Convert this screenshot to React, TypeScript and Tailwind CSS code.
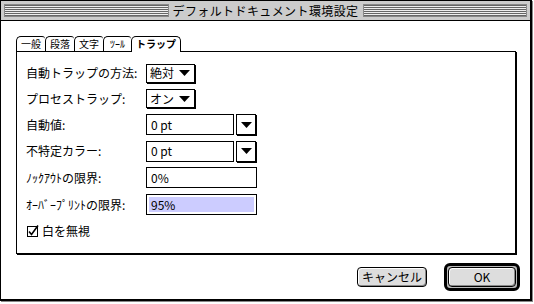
const jp = "font-['Noto_Sans_CJK_JP','Noto_Sans',sans-serif]";

function Tri() {
  return (
    <svg width="11" height="6" viewBox="0 0 11 6" className="shrink-0">
      <path d="M0 0h11L5.5 6z" fill="#000" />
    </svg>
  );
}

function Popup({ value, w }: { value: string; w: string }) {
  return (
    <div className={`flex h-[19px] ${w} items-center justify-between border border-black bg-white pl-[3px] pr-[4px] text-[12px] shadow-[1px_1px_0_#000]`}>
      <span className="leading-none">{value}</span>
      <Tri />
    </div>
  );
}

function Field({ value, w, hilite }: { value: string; w: string; hilite?: boolean }) {
  return (
    <div className={`flex h-[21px] ${w} items-stretch border border-black bg-white p-[2px] text-[12px]`}>
      <div className={`flex flex-1 items-center pl-[2px] leading-none ${hilite ? "bg-[#ccccff]" : ""}`}>{value}</div>
    </div>
  );
}

function Combo({ value }: { value: string }) {
  return (
    <div className="flex items-center gap-[2px]">
      <Field value={value} w="w-[88px]" />
      <div className="flex h-[21px] w-[20px] items-center justify-center border border-black bg-white shadow-[1px_1px_0_#000]">
        <Tri />
      </div>
    </div>
  );
}

const tabs = [
  { t: "一般", px: "px-[4px]" },
  { t: "段落", px: "px-[4px]" },
  { t: "文字", px: "px-[4px]" },
  { t: "ﾂｰﾙ", px: "px-[6px]" },
];

export default function App() {
  return (
    <div className={`h-[304px] w-[534px] bg-white ${jp} text-black`}>
      <div className="flex h-[301px] w-[532px] flex-col border-t border-l border-r-2 border-b-2 border-black bg-white shadow-[1px_1px_0_#888]">
        {/* title bar */}
        <div className="flex h-[20px] items-center gap-[4px] border-b border-black bg-[#cccccc] px-[3px]">
          <div className="h-[13px] flex-1 border border-[#888] bg-[repeating-linear-gradient(to_bottom,#666_0_1px,#eeeeee_1px_2px)]" />
          <span className="text-[12px] leading-none tracking-[0.4px]">デフォルトドキュメント環境設定</span>
          <div className="h-[13px] flex-1 border border-[#888] bg-[repeating-linear-gradient(to_bottom,#666_0_1px,#eeeeee_1px_2px)]" />
        </div>

        <div className="flex flex-1 flex-col pl-[15px] pr-[14px] pt-[15px]">
          {/* tabs */}
          <div className="flex items-end">
            {tabs.map(({ t, px }) => (
              <div
                key={t}
                className={`flex h-[15px] items-center rounded-tl-[5px] rounded-tr-[3px] border-t border-l border-black ${px} text-[10px] leading-none`}
              >
                {t}
              </div>
            ))}
            <div className="relative z-10 -mb-px flex h-[16px] items-center rounded-t-[5px] border-t border-r border-l border-black bg-white px-[4px] pb-px text-[10px] font-bold leading-none">
              トラップ
            </div>
          </div>

          {/* panel */}
          <div className="flex h-[203px] flex-col border border-black pl-[9px] pt-[8px] text-[12px] shadow-[1px_1px_0_#000]">
            <div className="flex h-[26px] items-center">
              <span className="w-[120px]">自動トラップの方法:</span>
              <Popup value="絶対" w="w-[49px]" />
            </div>
            <div className="flex h-[25px] items-center">
              <span className="w-[120px]">プロセストラップ:</span>
              <Popup value="オン" w="w-[49px]" />
            </div>
            <div className="flex h-[27px] items-center">
              <span className="w-[120px]">自動値:</span>
              <Combo value="0 pt" />
            </div>
            <div className="flex h-[26px] items-center">
              <span className="w-[120px]">不特定カラー:</span>
              <Combo value="0 pt" />
            </div>
            <div className="flex h-[27px] items-center">
              <span className="w-[120px]">ﾉｯｸｱｳﾄの限界:</span>
              <Field value="0%" w="w-[111px]" />
            </div>
            <div className="flex h-[27px] items-center">
              <span className="w-[120px]">ｵｰﾊﾞｰﾌﾟﾘﾝﾄの限界:</span>
              <Field value="95%" w="w-[111px]" hilite />
            </div>
            <div className="flex h-[26px] items-center gap-[3px] pl-px">
              <svg width="12" height="12" viewBox="0 0 12 12" className="overflow-visible">
                <rect x="0.5" y="1.5" width="10" height="10" fill="#fff" stroke="#000" />
                <path d="M2 6.5l2.5 3L11 0.5" fill="none" stroke="#000" strokeWidth="1.6" />
              </svg>
              <span>白を無視</span>
            </div>
          </div>

          {/* buttons */}
          <div className="-mr-[4px] mt-[9px] flex items-center justify-end gap-[17px]">
            <button className="flex h-[20px] w-[70px] items-center justify-center rounded-[4px] border border-black bg-[#dddddd] text-[12px] leading-none shadow-[inset_-1px_-1px_0_#888,inset_1px_1px_0_#fff]">
              キャンセル
            </button>
            <div className="rounded-[6px] border-[3px] border-black bg-[#bbbbbb] p-px">
              <button className="flex h-[20px] w-[68px] items-center justify-center rounded-[4px] border border-black bg-[#dddddd] text-[12px] leading-none shadow-[inset_-1px_-1px_0_#888,inset_1px_1px_0_#fff]">
                OK
              </button>
            </div>
          </div>
        </div>
      </div>
    </div>
  );
}
